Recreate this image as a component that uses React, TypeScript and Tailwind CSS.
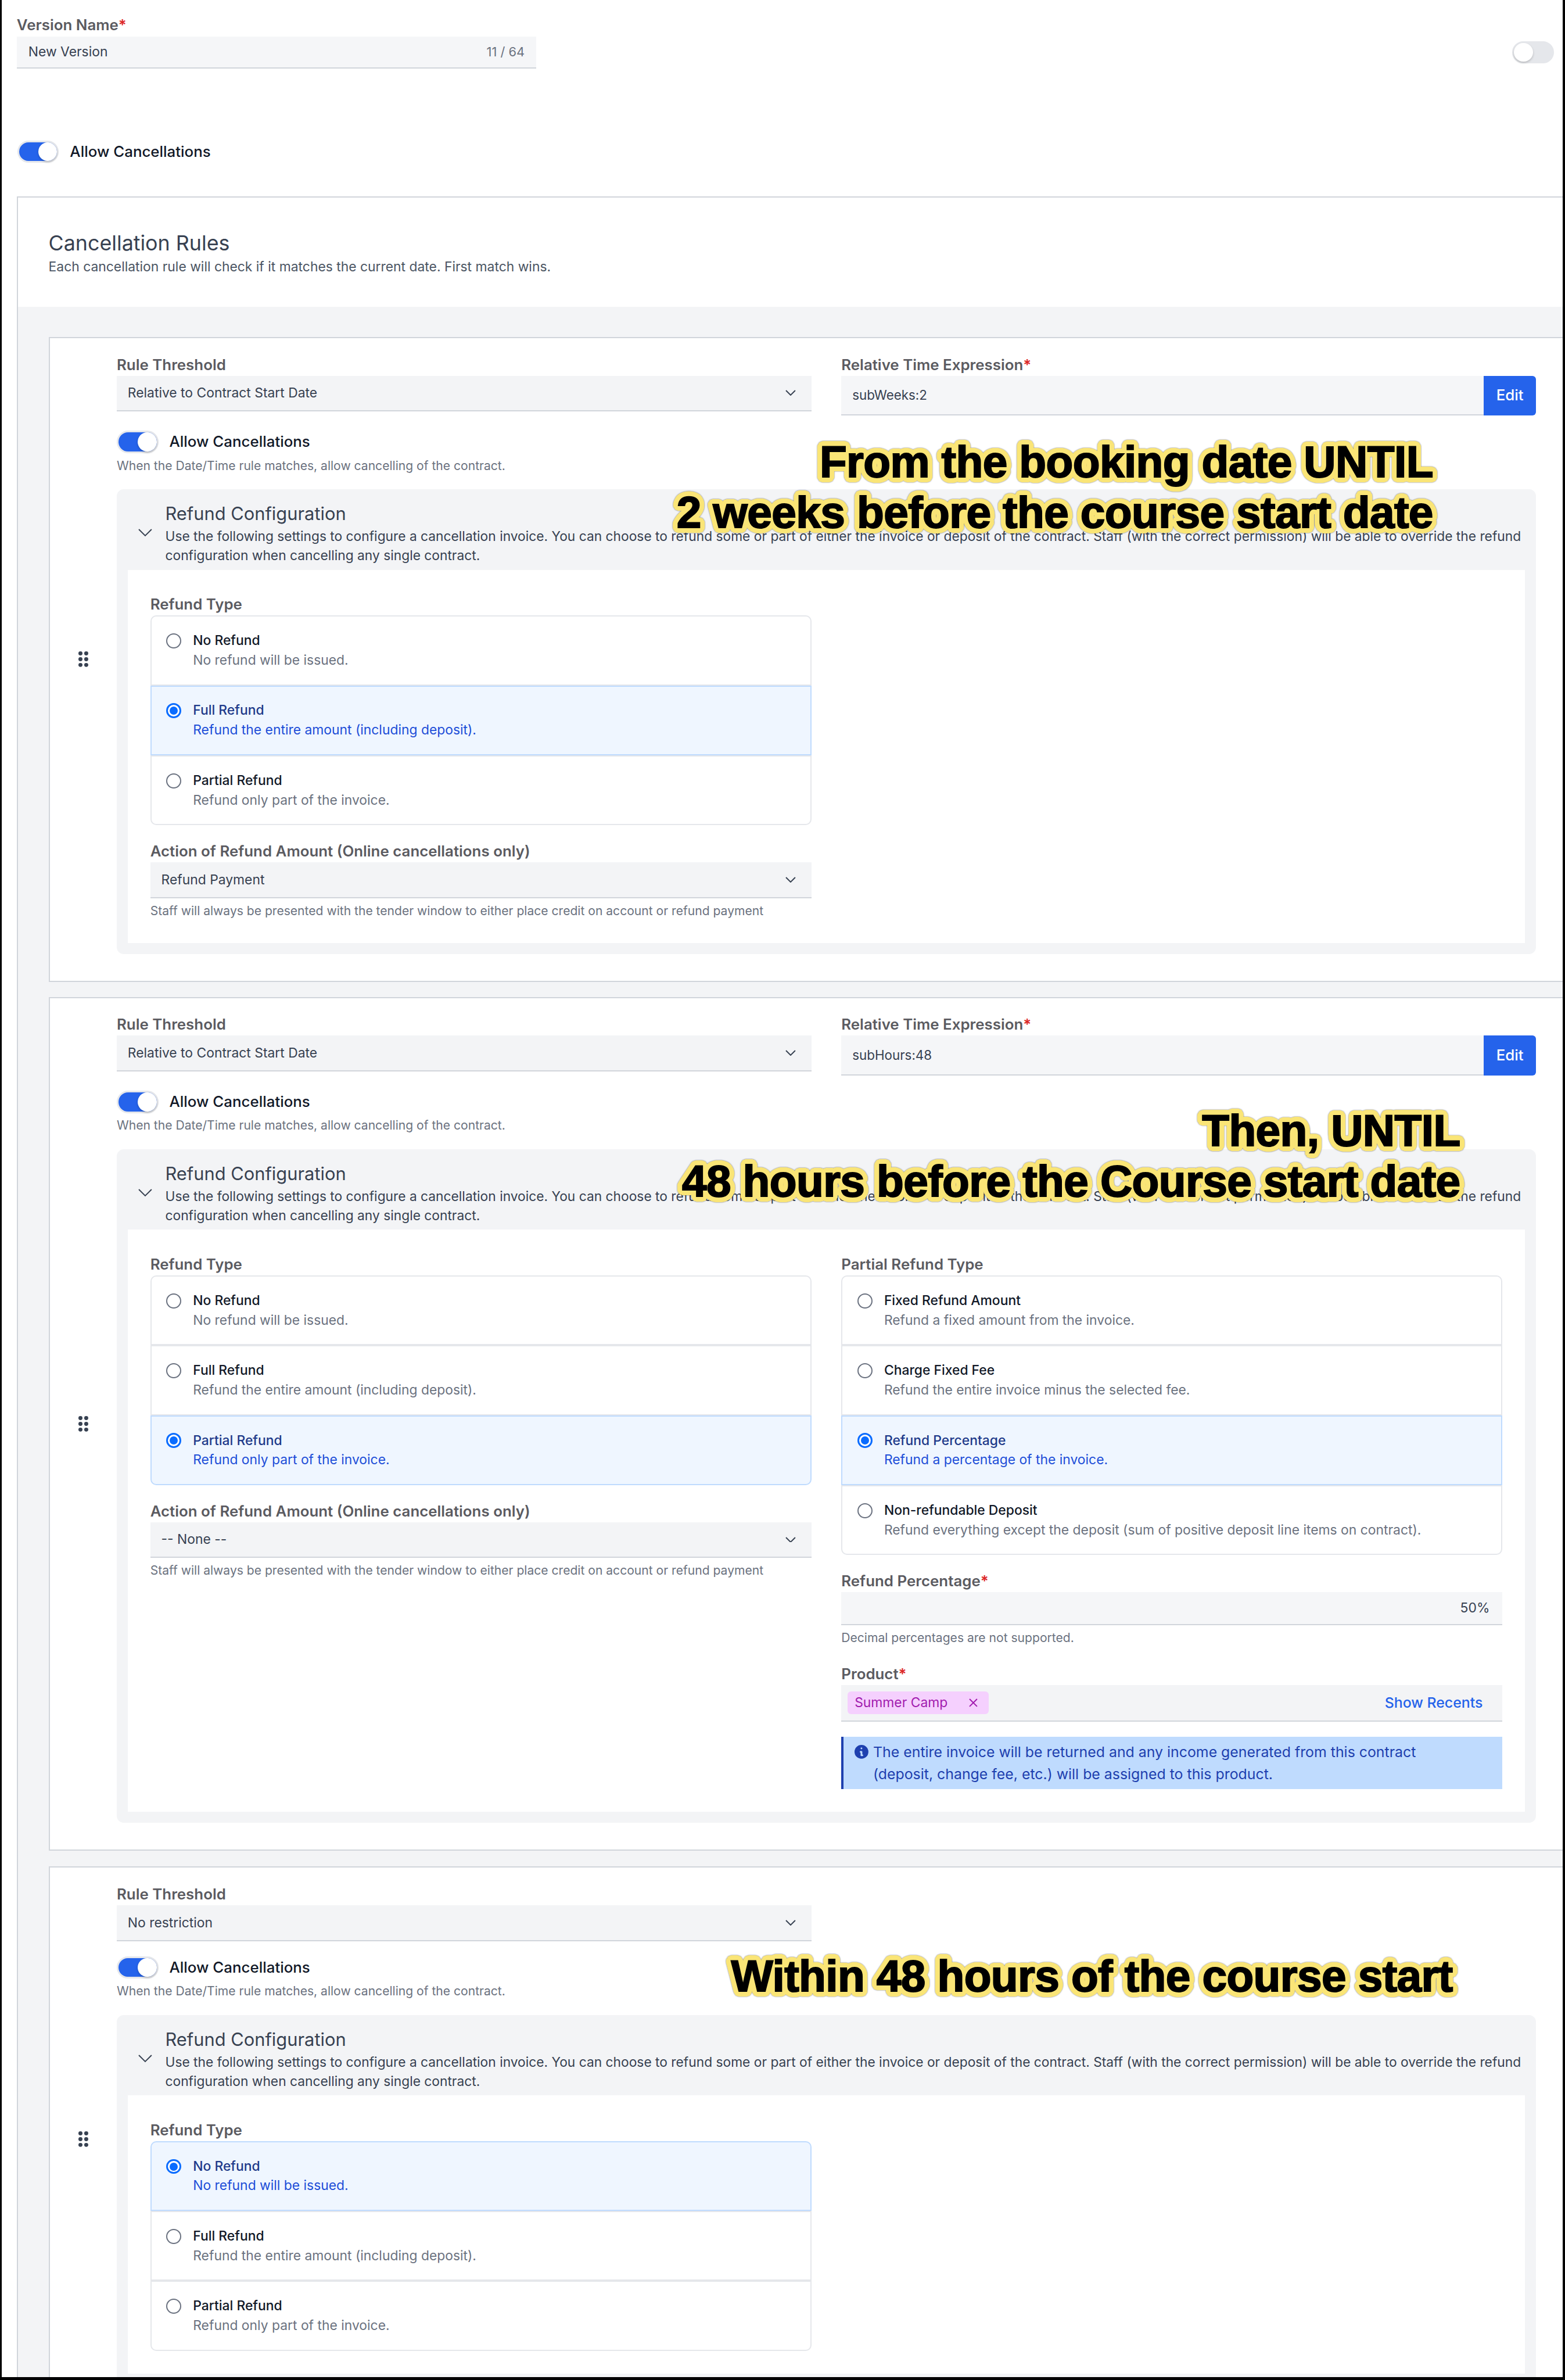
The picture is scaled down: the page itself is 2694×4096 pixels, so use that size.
import React from 'react';

// yellow halo round the callout letters: rings of hard text shadows
const haloShadow = [4.5, 9]
  .flatMap(r =>
    Array.from({ length: 36 }, (_, i) => {
      const a = (i / 36) * Math.PI * 2;
      return `${(Math.cos(a) * r).toFixed(2)}px ${(Math.sin(a) * r).toFixed(2)}px 0 #fae577`;
    })
  )
  .join(',');

function Chevron() {
  return (
    <svg width="18" height="10" viewBox="0 0 18 10" fill="none" stroke="#374151" strokeWidth="2">
      <path d="M1 1l8 8 8-8" />
    </svg>
  );
}

function Toggle({ on }: { on?: boolean }) {
  return (
    <div className={`w-[72px] h-[39px] shrink-0 rounded-full border-[3.1px] border-[#e5e7eb] flex items-center ${on ? 'bg-[#2563eb] justify-end' : 'bg-[#e5e7eb] justify-start'}`}>
      <div className="w-[33px] h-[33px] rounded-full bg-white shadow-[0_2px_4px_rgba(0,0,0,0.2)]" />
    </div>
  );
}

function Label({ text, required }: { text: string, required?: boolean }) {
  return (
    <div className="h-[37px] leading-[36px] text-[26px] font-semibold text-[#5b5b61]">
      {text}{required && <span className="text-[#dc2626]">*</span>}
    </div>
  );
}

function Select({ value }: { value: string }) {
  return (
    <div className="h-[62px] bg-[#f3f4f6] border-b-[2.1px] border-[#d1d5db] flex items-center justify-between pl-[19px] pr-[27px] text-[23px] text-[#374151]">
      <span>{value}</span>
      <Chevron />
    </div>
  );
}

function Help({ text }: { text: string }) {
  return <div className="mt-[5px] leading-[34px] text-[21.2px] text-[#6b7280]">{text}</div>;
}

type Option = { title: string, sub: string };

function RadioGroup({ options, selected }: { options: Option[], selected: number }) {
  return (
    <div className="flex flex-col">
      {options.map((o, i) => {
        const active = i === selected;
        return (
          <div
            key={o.title}
            className={`h-[121px] border-[2.1px] pl-[26px] pt-[25px] flex items-start gap-[20px] ${active ? 'bg-[#eff6ff] border-[#bfdbfe]' : 'bg-white border-[#e5e7eb]'} ${i === 0 ? 'rounded-t-[10px]' : ''} ${i === options.length - 1 ? 'rounded-b-[10px]' : ''}`}
          >
            {active ? (
              <div className="mt-[4px] w-[26px] h-[26px] rounded-full border-[3.1px] border-[#0a6cff] bg-white flex items-center justify-center">
                <div className="w-[14px] h-[14px] rounded-full bg-[#0a6cff]" />
              </div>
            ) : (
              <div className="mt-[4px] w-[26px] h-[26px] rounded-full border-[2.1px] border-[#6b7280] bg-white" />
            )}
            <div className="leading-[34px] text-[23px]">
              <div className={`font-medium ${active ? 'text-[#1e3a8a]' : 'text-[#111827]'}`}>{o.title}</div>
              <div className={active ? 'text-[#1d4ed8]' : 'text-[#6b7280]'}>{o.sub}</div>
            </div>
          </div>
        );
      })}
    </div>
  );
}

const refundOptions: Option[] = [
  { title: 'No Refund', sub: 'No refund will be issued.' },
  { title: 'Full Refund', sub: 'Refund the entire amount (including deposit).' },
  { title: 'Partial Refund', sub: 'Refund only part of the invoice.' },
];

const partialOptions: Option[] = [
  { title: 'Fixed Refund Amount', sub: 'Refund a fixed amount from the invoice.' },
  { title: 'Charge Fixed Fee', sub: 'Refund the entire invoice minus the selected fee.' },
  { title: 'Refund Percentage', sub: 'Refund a percentage of the invoice.' },
  { title: 'Non-refundable Deposit', sub: 'Refund everything except the deposit (sum of positive deposit line items on contract).' },
];

function Callout({ lines, top, right }: { lines: string[], top: string, right: string }) {
  return (
    <div
      className={`absolute z-10 text-right whitespace-nowrap font-['Liberation_Sans',Arial,sans-serif] font-bold text-[77px] leading-[88px] tracking-[-0.6px] text-black [-webkit-text-stroke:2px_#000] [filter:drop-shadow(0_0_1px_rgba(0,0,0,0.55))] ${top} ${right}`}
      style={{ textShadow: haloShadow }}
    >
      {lines.map(l => <div key={l}>{l}</div>)}
    </div>
  );
}

function Rule({ threshold, expression, callout, children }: { threshold: string, expression?: string, callout: React.ReactNode, children: React.ReactNode }) {
  return (
    <div className="relative flex bg-white border-y-[2.1px] border-l-[2.1px] border-[#d1d5db]">
      {callout}
      <div className="w-[116px] shrink-0 flex items-center justify-center">
        <svg width="17" height="27" viewBox="0 0 17 27" fill="#374151">
          <circle cx="3.5" cy="3.5" r="3.5" />
          <circle cx="13.5" cy="3.5" r="3.5" />
          <circle cx="3.5" cy="13.5" r="3.5" />
          <circle cx="13.5" cy="13.5" r="3.5" />
          <circle cx="3.5" cy="23.5" r="3.5" />
          <circle cx="13.5" cy="23.5" r="3.5" />
        </svg>
      </div>
      <div className="flex-1 pt-[28px] pr-[46px] pb-[46px]">
        <div className="grid grid-cols-2 gap-x-[52px] items-start">
          <div>
            <Label text="Rule Threshold" />
            <Select value={threshold} />
          </div>
          {expression && (
            <div>
              <Label text="Relative Time Expression" required />
              <div className="flex h-[69px]">
                <div className="flex-1 bg-[#f5f6f8] border-b-[2.1px] border-[#d1d5db] flex items-center pl-[19px] text-[22.5px] text-[#374151]">{expression}</div>
                <div className="w-[90px] bg-[#2563eb] rounded-r-[6px] flex items-center justify-center text-[26px] font-medium text-white">Edit</div>
              </div>
            </div>
          )}
        </div>

        <div className="mt-[26px] flex items-center gap-[19px]">
          <Toggle on />
          <span className="text-[26px] font-medium text-[#111827]">Allow Cancellations</span>
        </div>
        <Help text="When the Date/Time rule matches, allow cancelling of the contract." />

        {/* Refund panel */}
        <div className="mt-[24px] rounded-[12px] bg-[#f3f4f6] pb-[19px]">
          <div className="h-[139px] pl-[37px] pr-[8px] pt-[21px] flex items-start gap-[23px]">
            <svg className="mt-[47px] shrink-0" width="24" height="14" viewBox="0 0 24 14" fill="none" stroke="#374151" strokeWidth="2">
              <path d="M1 1l11 11L23 1" />
            </svg>
            <div>
              <div className="h-[43px] leading-[43px] text-[31px] text-[#374151]">Refund Configuration</div>
              <div className="leading-[33.5px] text-[22.9px] text-[#374151]">
                Use the following settings to configure a cancellation invoice. You can choose to refund some or part of either the invoice or deposit of the contract. Staff (with the correct permission) will be able to override the refund configuration when cancelling any single contract.
              </div>
            </div>
          </div>
          <div className="mx-[19px] bg-white pt-[42px] px-[39px] pb-[39px]">
            {children}
          </div>
        </div>
      </div>
    </div>
  );
}

function ActionField({ value }: { value: string }) {
  return (
    <div className="mt-[27px]">
      <Label text="Action of Refund Amount (Online cancellations only)" />
      <Select value={value} />
      <Help text="Staff will always be presented with the tender window to either place credit on account or refund payment" />
    </div>
  );
}

export default function App() {
  return (
    <div className="bg-black min-h-screen font-['Inter',sans-serif]">
      <div className="[zoom:0.9947] w-[2708px] h-[4117px] overflow-hidden bg-white border-l-[3.1px] border-r-[4.1px] border-b-[4.1px] border-black">
        {/* Version name */}
        <div className="pl-[26px] pr-[15px] pt-[23px] flex items-start justify-between">
          <div className="w-[899px]">
            <div className="h-[40px] leading-[40px] text-[26px] font-semibold text-[#5b5b61]">
              Version Name<span className="text-[#dc2626]">*</span>
            </div>
            <div className="h-[56px] bg-[#f5f6f8] border-b-[2.1px] border-[#d1d5db] flex items-center justify-between pl-[20px] pr-[20px] text-[23px]">
              <span className="text-[#374151]">New Version</span>
              <span className="text-[22px] text-[#6b7280]">11 / 64</span>
            </div>
          </div>
          <div className="mt-[48px]"><Toggle /></div>
        </div>

        <div className="pl-[27px] mt-[124px] flex items-center gap-[19px]">
          <Toggle on />
          <span className="text-[26px] font-medium text-[#111827]">Allow Cancellations</span>
        </div>

        {/* Rules */}
        <div className="ml-[26px] mt-[58px] border-t-[2.1px] border-l-[2.1px] border-[#d1d5db]">
          <div className="h-[189px] bg-white pl-[53px] pt-[57px]">
            <div className="h-[44px] leading-[44px] text-[36px] text-[#374151]">Cancellation Rules</div>
            <div className="mt-[2px] leading-[34px] text-[23px] text-[#4b5563]">Each cancellation rule will check if it matches the current date. First match wins.</div>
          </div>
          <div className="bg-[#f3f4f6] pl-[53px] pt-[52px] flex flex-col gap-[26px]">
            <Rule
              threshold="Relative to Contract Start Date"
              expression="subWeeks:2"
              callout={<Callout lines={['From the booking date UNTIL', '2 weeks before the course start date']} top="top-[170px]" right="right-[224px]" />}
            >
              <div className="grid grid-cols-2 gap-x-[52px]">
                <div>
                  <Label text="Refund Type" />
                  <RadioGroup options={refundOptions} selected={1} />
                  <ActionField value="Refund Payment" />
                </div>
              </div>
            </Rule>

            <Rule
              threshold="Relative to Contract Start Date"
              expression="subHours:48"
              callout={<Callout lines={['Then, UNTIL', '48 hours before the Course start date']} top="top-[185px]" right="right-[177px]" />}
            >
              <div className="grid grid-cols-2 gap-x-[52px] items-start">
                <div>
                  <Label text="Refund Type" />
                  <RadioGroup options={refundOptions} selected={2} />
                  <ActionField value="-- None --" />
                </div>
                <div>
                  <Label text="Partial Refund Type" />
                  <RadioGroup options={partialOptions} selected={2} />
                  <div className="mt-[27px]">
                    <Label text="Refund Percentage" required />
                    <div className="h-[57px] bg-[#f5f6f8] border-b-[2.1px] border-[#d1d5db] flex items-center justify-end pr-[22px] text-[23px] text-[#374151]">50%</div>
                    <Help text="Decimal percentages are not supported." />
                  </div>
                  <div className="mt-[28px]">
                    <Label text="Product" required />
                    <div className="h-[63px] bg-[#f3f4f6] border-b-[2.1px] border-[#d1d5db] flex items-center justify-between pl-[11px] pr-[34px]">
                      <div className="h-[39px] w-[244px] rounded-[6px] bg-[#f5d0fe] pl-[12px] pr-[18px] flex items-center justify-between text-[23px] text-[#a21caf]">
                        <span>Summer Camp</span>
                        <svg width="17" height="15" viewBox="0 0 17 15" fill="none" stroke="#a21caf" strokeWidth="2">
                          <path d="M2 1l13 13M15 1L2 14" />
                        </svg>
                      </div>
                      <span className="text-[25px] font-medium text-[#2563eb]">Show Recents</span>
                    </div>
                  </div>
                  <div className="mt-[26px] h-[91px] bg-[#bfdbfe] border-l-[4.1px] border-[#1e40af] pl-[16px] pr-[70px] pt-[7px] flex items-start gap-[5px] leading-[39px] text-[25px] text-[#1e40af]">
                    <svg className="shrink-0 mt-[4px]" width="30" height="30" viewBox="0 0 20 20" fill="#1e40af">
                      <path fillRule="evenodd" clipRule="evenodd" d="M18 10a8 8 0 11-16 0 8 8 0 0116 0zm-7-4a1 1 0 11-2 0 1 1 0 012 0zM9 9a1 1 0 000 2v3a1 1 0 001 1h1a1 1 0 100-2v-3a1 1 0 00-1-1H9z" />
                    </svg>
                    <div>The entire invoice will be returned and any income generated from this contract (deposit, change fee, etc.) will be assigned to this product.</div>
                  </div>
                </div>
              </div>
            </Rule>

            <div className="mt-[2px]">
              <Rule
                threshold="No restriction"
                callout={<Callout lines={['Within 48 hours of the course start']} top="top-[143px]" right="right-[190px]" />}
              >
                <div className="grid grid-cols-2 gap-x-[52px]">
                  <div>
                    <Label text="Refund Type" />
                    <RadioGroup options={refundOptions} selected={0} />
                  </div>
                </div>
              </Rule>
            </div>
          </div>
        </div>
      </div>
    </div>
  );
}
